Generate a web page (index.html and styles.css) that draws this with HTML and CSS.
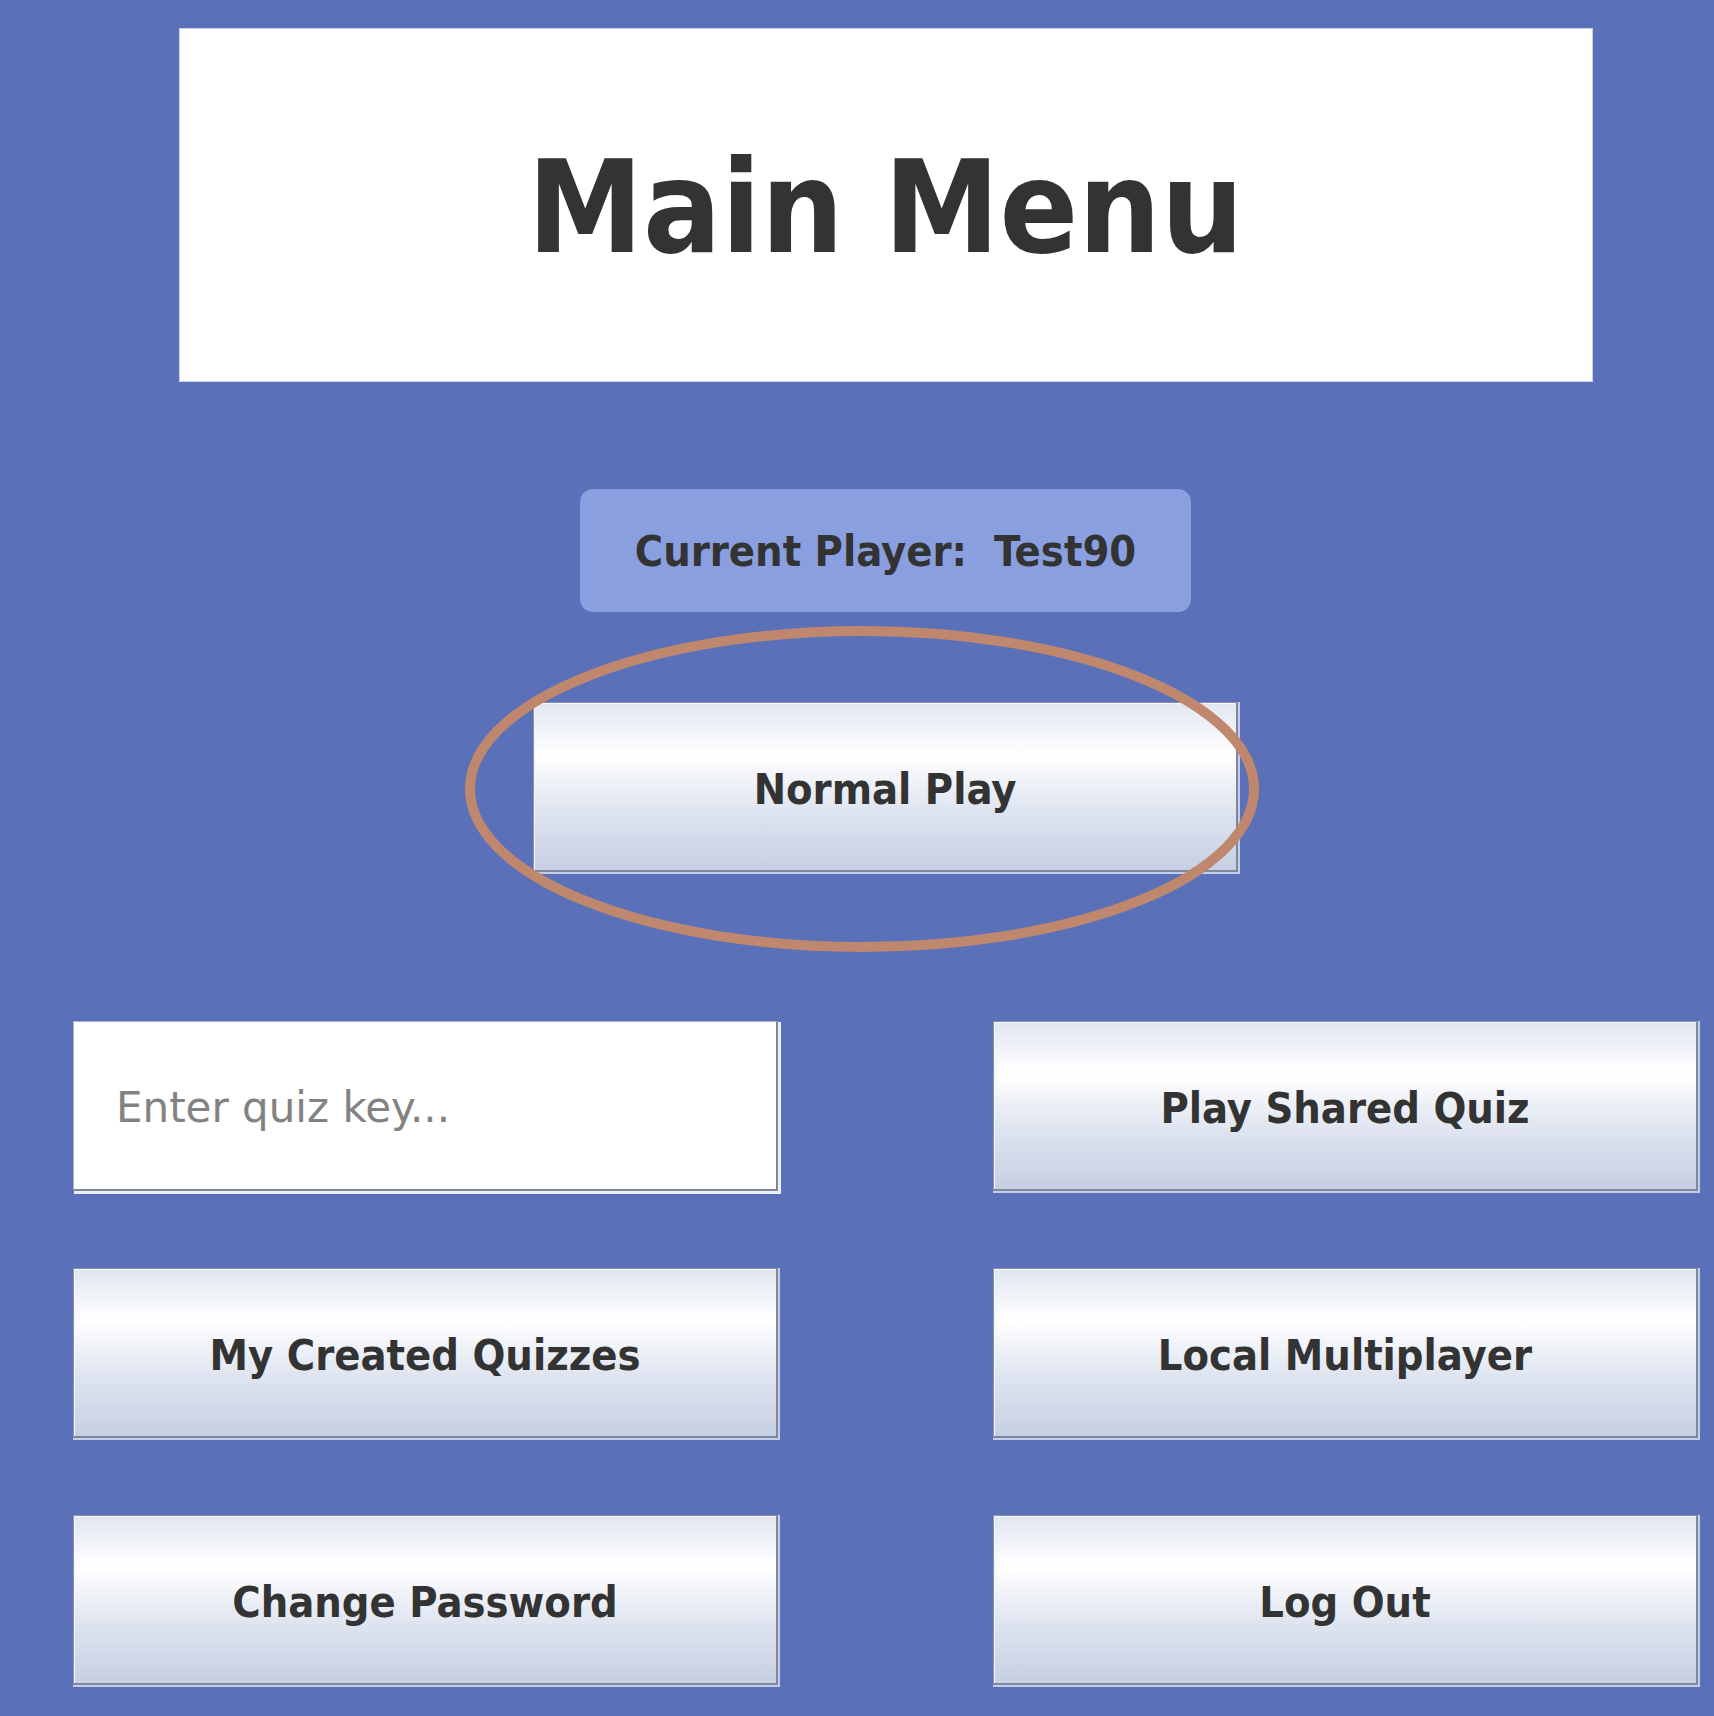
FILE: index.html
```html
<!DOCTYPE html>
<html lang="en">
<head>
<meta charset="utf-8">
<title>Main Menu</title>
<link rel="stylesheet" href="styles.css">
</head>
<body>
<div class="page">
  <header class="title-box"><h1 class="title">Main Menu</h1></header>
  <div class="player-pill">Current Player:&nbsp; Test90</div>
  <div class="normal-wrap">
    <button class="btn btn-normal">Normal Play</button>
    <svg class="highlight" viewBox="0 0 796 328" width="796" height="328" aria-hidden="true">
      <ellipse cx="398" cy="164" rx="392" ry="158" fill="none" stroke="#bf876e" stroke-width="10"/>
    </svg>
  </div>
  <div class="grid">
    <div class="field"><span class="placeholder">Enter quiz key...</span></div>
    <button class="btn">Play Shared Quiz</button>
    <button class="btn">My Created Quizzes</button>
    <button class="btn">Local Multiplayer</button>
    <button class="btn">Change Password</button>
    <button class="btn">Log Out</button>
  </div>
</div>
</body>
</html>
```
FILE: styles.css
```css
html, body {
  margin: 0;
  padding: 0;
  background: #5a70b9;
}
body {
  width: 1714px;
  height: 1716px;
  overflow: hidden;
  font-family: "DejaVu Sans Condensed", "DejaVu Sans", sans-serif;
  color: #333333;
}
.page {
  width: 1625px;
  margin-left: 73px;
  padding-top: 28px;
  display: flex;
  flex-direction: column;
  align-items: center;
}
.title-box {
  width: 1414px;
  height: 354px;
  box-sizing: border-box;
  background: #ffffff;
  border: 1px solid #c9d1ee;
  display: flex;
  align-items: center;
  justify-content: center;
  padding-top: 4px;
}
.title {
  margin: 0;
  font-size: 129px;
  font-weight: bold;
  line-height: 1;
  color: #333333;
}
.player-pill {
  margin-top: 107px;
  width: 611px;
  height: 123px;
  box-sizing: border-box;
  border-radius: 13px;
  background: #8a9fe0;
  display: flex;
  align-items: center;
  justify-content: center;
  font-size: 43px;
  font-weight: bold;
}
.normal-wrap {
  position: relative;
  margin-top: 90px;
  width: 705px;
  height: 170px;
}
.btn {
  display: flex;
  align-items: center;
  justify-content: center;
  width: 705px;
  height: 170px;
  box-sizing: border-box;
  padding: 4px 0 0 0;
  margin: 0;
  font-family: "DejaVu Sans Condensed", "DejaVu Sans", sans-serif;
  font-size: 43px;
  font-weight: bold;
  color: #333333;
  border: 1px solid #8a93a6;
  border-right: 2px solid #7f889a;
  border-bottom: 2px solid #7f889a;
  box-shadow: 1px 1px 0 1px #c3cce8, inset 1px 1px 0 #f3f5fb;
  background: linear-gradient(to bottom, #e1e6f1 0%, #eef1f7 14%, #fbfcfe 26%, #ffffff 32%, #eef1f7 48%, #dde3ef 66%, #c6cfe3 100%);
}
.btn-normal {
  width: 100%;
  height: 100%;
}
.highlight {
  position: absolute;
  left: -69px;
  top: -77px;
  pointer-events: none;
}
.grid {
  margin-top: 149px;
  display: grid;
  grid-template-columns: 705px 705px;
  grid-auto-rows: 170px;
  column-gap: 215px;
  row-gap: 77px;
}
.field {
  height: 170px;
  box-sizing: border-box;
  background: #ffffff;
  border-top: 1px solid #aab2c4;
  border-left: 1px solid #aab2c4;
  border-right: 2px solid #7f889a;
  border-bottom: 2px solid #7f889a;
  box-shadow: 2px 2px 0 1px #eef1fa;
  display: flex;
  align-items: center;
  padding: 4px 0 0 42px;
}
.placeholder {
  font-family: "DejaVu Sans", sans-serif;
  font-size: 42px;
  color: #828282;
}
```
